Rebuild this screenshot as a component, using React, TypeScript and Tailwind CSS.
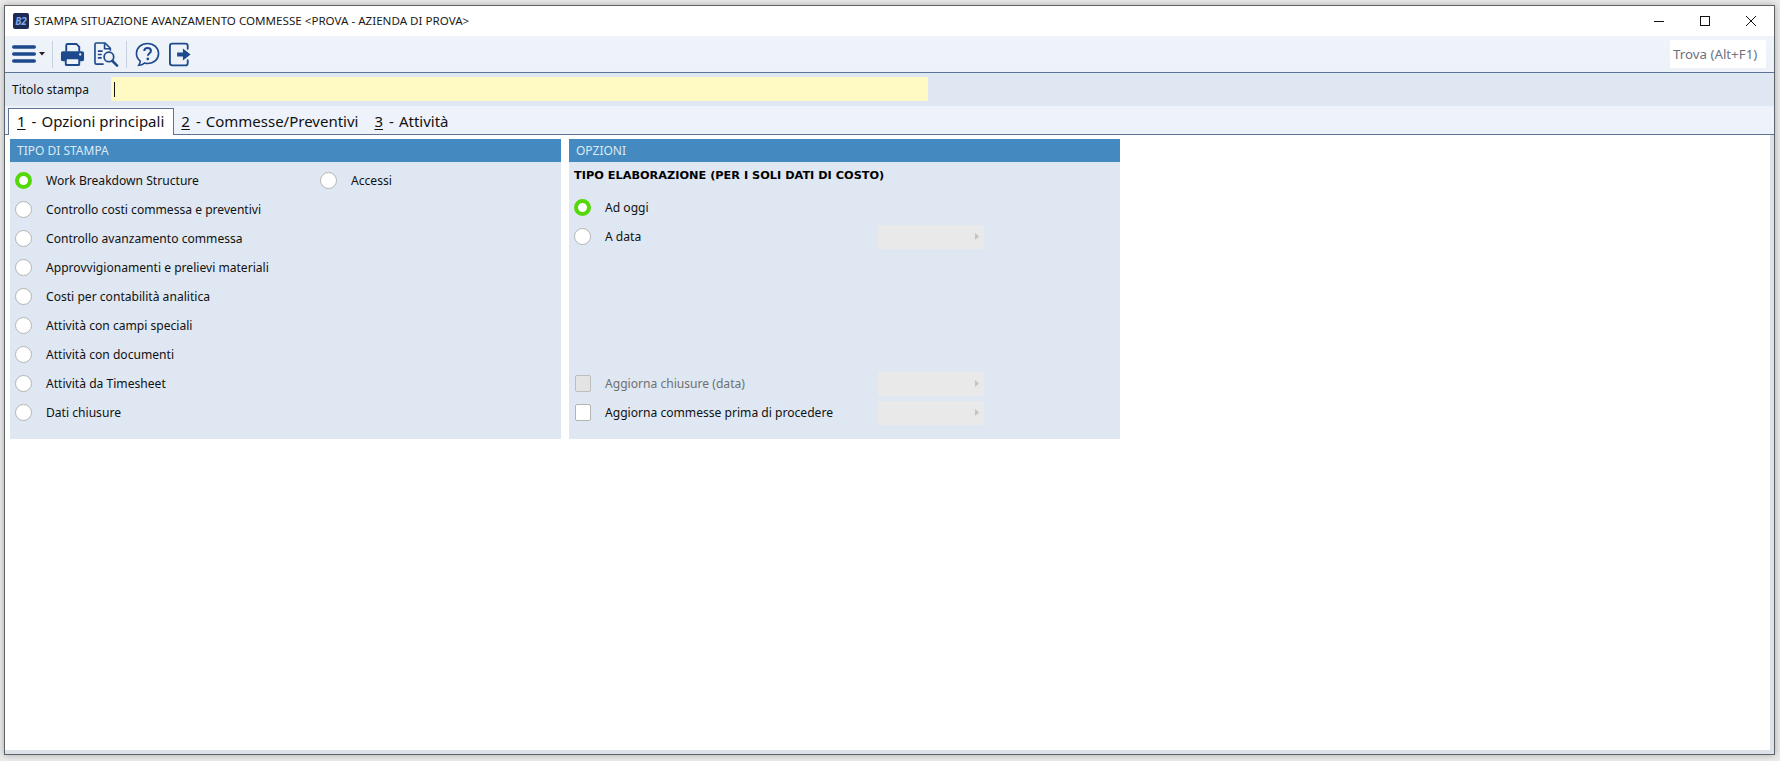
const blue = "#1d4a8c";

function Radio({ on }: { on?: boolean }) {
  return on ? (
    <span className="h-[17px] w-[17px] shrink-0 rounded-full border-[4px] border-[#55d80a] bg-white" />
  ) : (
    <span className="h-[17px] w-[17px] shrink-0 rounded-full border border-[#b4b4b4] bg-white" />
  );
}

function RadioRow({ label, on }: { label: string; on?: boolean }) {
  return (
    <div className="flex h-[29px] items-center">
      <Radio on={on} />
      <span className="ml-[14px] whitespace-nowrap pt-[1px]">{label}</span>
    </div>
  );
}

function Picker() {
  return (
    <div className="flex h-[24px] w-[106px] items-center justify-end bg-[#e9e9e9] pr-[5px]">
      <svg width="4" height="7" viewBox="0 0 4 7">
        <path d="M0 0 L4 3.5 L0 7 Z" fill="#c4c4c4" />
      </svg>
    </div>
  );
}

function Section({ title, children }: { title: string; children: React.ReactNode }) {
  return (
    <section className="h-[300px] w-[551px] bg-[#dfe7f2]">
      <div className="flex h-[23px] items-center bg-[#448ac0] pl-[7px] pt-[1px] text-[12px] text-[#dce8f3]">{title}</div>
      {children}
    </section>
  );
}

function Sep({ className }: { className: string }) {
  return <div className={"h-[27px] w-px bg-[#c7d1de] " + className} />;
}

const left = [
  "Work Breakdown Structure",
  "Controllo costi commessa e preventivi",
  "Controllo avanzamento commessa",
  "Approvvigionamenti e prelievi materiali",
  "Costi per contabilità analitica",
  "Attività con campi speciali",
  "Attività con documenti",
  "Attività da Timesheet",
  "Dati chiusure",
];

function Tab({ n, label, active }: { n: string; label: string; active?: boolean }) {
  return (
    <div
      className={
        active
          ? "z-10 -mb-px flex h-[27px] items-center border border-b-0 border-[#5a7396] bg-white pb-[1px] pl-[8px] pr-[9px]"
          : "flex h-[26px] items-center pl-[7px] pr-[9px] pt-[1px]"
      }
    >
      <span className="underline underline-offset-2">{n}</span>
      <span className="ml-[6px]">-</span>
      <span className="ml-[5px] whitespace-nowrap">{label}</span>
    </div>
  );
}

export default function App() {
  return (
    <div
      className="h-[761px] w-[1780px] overflow-hidden bg-[#ececec] pl-[4px] pr-[5px] pt-[5px] text-[12.1px] text-[#111] antialiased"
      style={{ fontFamily: '"Noto Sans", "Liberation Sans", sans-serif' }}
    >
      <div className="flex h-[750px] flex-col border border-[#5f6266] bg-white shadow-[0_0_7px_rgba(0,0,0,0.3)]">
        {/* title bar */}
        <div className="flex h-[30px] shrink-0 items-center">
          <div className="ml-[8px] flex h-[16px] w-[16px] items-center justify-center rounded-[2px] bg-[#1c2a55] text-[10px] font-bold italic leading-none text-[#7fa6e6]">
            B2
          </div>
          <span className="ml-[5px] text-[11.6px] text-[#1a1a1a]">
            STAMPA SITUAZIONE AVANZAMENTO COMMESSE &lt;PROVA - AZIENDA DI PROVA&gt;
          </span>
          <div className="ml-auto flex items-center">
            <svg width="46" height="14" viewBox="0 0 46 14">
              <path d="M18 7.5H28" stroke="#111" strokeWidth="1" />
            </svg>
            <svg width="46" height="14" viewBox="0 0 46 14">
              <rect x="18.5" y="2.5" width="9" height="9" fill="none" stroke="#111" strokeWidth="1" />
            </svg>
            <svg width="46" height="14" viewBox="0 0 46 14">
              <path d="M18 2 L28 12 M28 2 L18 12" stroke="#111" strokeWidth="1" />
            </svg>
          </div>
        </div>

        {/* toolbar */}
        <div className="flex h-[37px] shrink-0 items-center border-b border-[#5a7396] bg-gradient-to-b from-[#eff3fa] to-[#edf2f9] pl-[7px] pr-[8px]">
          <svg width="24" height="20" viewBox="0 0 24 20">
            <path d="M1.7 3H22.3 M1.7 10H22.3 M1.7 17H22.3" stroke={blue} strokeWidth="3.4" strokeLinecap="round" />
          </svg>
          <svg width="6" height="4" viewBox="0 0 6 4" className="ml-[3px]">
            <path d="M0 0H6L3 3.5Z" fill="#222" />
          </svg>
          <Sep className="ml-[7px]" />
          <svg width="25" height="25" viewBox="0 0 26 26" className="ml-[7px]">
            <path d="M6.5 10V3.5C6.5 2.6 7.1 2 8 2H17L20 5V10" fill="none" stroke={blue} strokeWidth="2" />
            <path d="M3 9.5H23C24.2 9.5 25 10.3 25 11.5V18.5C25 19.6 24.2 20 23 20H21V23.5C21 24.4 20.4 25 19.5 25H6.5C5.6 25 5 24.4 5 23.5V20H3C1.8 20 1 19.6 1 18.5V11.5C1 10.3 1.8 9.5 3 9.5Z" fill={blue} />
            <rect x="7" y="18" width="12" height="5" rx="0.5" fill="#eef2f9" />
            <circle cx="21" cy="13" r="1.2" fill="#eef2f9" />
          </svg>
          <svg width="25" height="25" viewBox="0 0 26 26" className="ml-[9px]">
            <path d="M10 23H2.5C1.7 23 1 22.3 1 21.5V2.5C1 1.7 1.7 1 2.5 1H11.5L17 6.5V9" fill="none" stroke={blue} strokeWidth="1.7" />
            <path d="M11 1.5V7H17" fill="none" stroke={blue} strokeWidth="1.7" />
            <path d="M4 9.5H9 M4 13H8 M4 16.5H8" stroke={blue} strokeWidth="1.6" />
            <circle cx="15.5" cy="15.5" r="5" fill="none" stroke={blue} strokeWidth="1.8" />
            <path d="M19 19.5L24 24.5" stroke={blue} strokeWidth="2.6" strokeLinecap="round" />
          </svg>
          <Sep className="ml-[7px]" />
          <svg width="25" height="25" viewBox="0 0 26 26" className="ml-[8px]">
            <path d="M13 1.5C6.4 1.5 1.5 6 1.5 12C1.5 15.4 3 18 5.5 19.8C5.4 21.4 4.9 22.9 4 24.2C6.3 24 8.3 23.1 9.8 21.9C10.8 22.2 11.9 22.4 13 22.4C19.6 22.4 24.5 18 24.5 12C24.5 6 19.6 1.5 13 1.5Z" fill="none" stroke={blue} strokeWidth="1.7" />
            <path d="M9.6 9.4C9.7 7.4 11.1 6.3 13.1 6.3C15.2 6.3 16.6 7.5 16.6 9.3C16.6 11.6 13.4 11.9 13.4 14.4" fill="none" stroke={blue} strokeWidth="2.1" />
            <circle cx="13.3" cy="17.6" r="1.4" fill={blue} />
          </svg>
          <svg width="25" height="25" viewBox="0 0 26 26" className="ml-[8px]">
            <path d="M20.5 7V4C20.5 2.6 19.6 1.7 18.2 1.7H4.5C3 1.7 2 2.7 2 4.2V21.8C2 23.3 3 24.3 4.5 24.3H18.2C19.6 24.3 20.5 23.4 20.5 22V19" fill="none" stroke={blue} strokeWidth="1.9" strokeLinecap="round" />
            <path d="M9.5 10.8H15.5V6.8L23.5 13L15.5 19.2V15.2H9.5Z" fill={blue} />
          </svg>
          <div className="ml-auto flex h-[28px] w-[96px] items-center bg-white pl-[3px] pt-[2px] text-[13.3px] text-[#6d7280]">Trova (Alt+F1)</div>
        </div>

        {/* titolo */}
        <div className="flex h-[33px] shrink-0 items-start bg-[#dfe7f2] pl-[7px] pt-[4px]">
          <span className="h-[24px] w-[99px] pt-[1px] text-[12px] leading-[24px]">Titolo stampa</span>
          <div className="flex h-[24px] w-[817px] items-center bg-[#fff9c4] pl-[3px]">
            <div className="h-[15px] w-px bg-[#111]" />
          </div>
        </div>

        {/* tabs */}
        <div className="flex h-[29px] shrink-0 items-end border-b border-[#5a7396] bg-[#eef2fa] pl-[3px] text-[15px] leading-none">
          <Tab n="1" label="Opzioni principali" active />
          <Tab n="2" label="Commesse/Preventivi" />
          <Tab n="3" label="Attività" />
        </div>

        {/* content */}
        <div className="flex min-h-0 flex-1 flex-col border-b-[4px] border-r-[4px] border-[#dde1ea] pl-[5px] pt-[4px]">
          <div className="flex gap-[8px]">
            <Section title="TIPO DI STAMPA">
              <div className="flex pl-[5px] pt-[4px]">
                <div className="w-[305px]">
                  {left.map((l, i) => (
                    <RadioRow key={l} label={l} on={i === 0} />
                  ))}
                </div>
                <RadioRow label="Accessi" />
              </div>
            </Section>
            <Section title="OPZIONI">
              <div className="pl-[5px] pt-[5px]">
                <div className="h-[20px] text-[11.3px] font-bold leading-[18px] text-black" style={{ fontFamily: '"DejaVu Sans", sans-serif' }}>
                  TIPO ELABORAZIONE (PER I SOLI DATI DI COSTO)
                </div>
                <div className="mt-[6px]">
                  <RadioRow label="Ad oggi" on />
                  <div className="flex items-center">
                    <div className="w-[304px]"><RadioRow label="A data" /></div>
                    <Picker />
                  </div>
                </div>
                <div className="mt-[118px] flex h-[29px] items-center pl-[1px]">
                  <span className="h-[17px] w-[16px] rounded-[2px] border border-[#bdbdbd] bg-[#e4e4e4]" />
                  <span className="ml-[14px] w-[273px] pt-[1px] text-[#6f6f6f]">Aggiorna chiusure (data)</span>
                  <Picker />
                </div>
                <div className="flex h-[29px] items-center pl-[1px]">
                  <span className="h-[17px] w-[16px] rounded-[2px] border border-[#b4b4b4] bg-white" />
                  <span className="ml-[14px] w-[273px] pt-[1px]">Aggiorna commesse prima di procedere</span>
                  <Picker />
                </div>
              </div>
            </Section>
          </div>
        </div>
      </div>
    </div>
  );
}
